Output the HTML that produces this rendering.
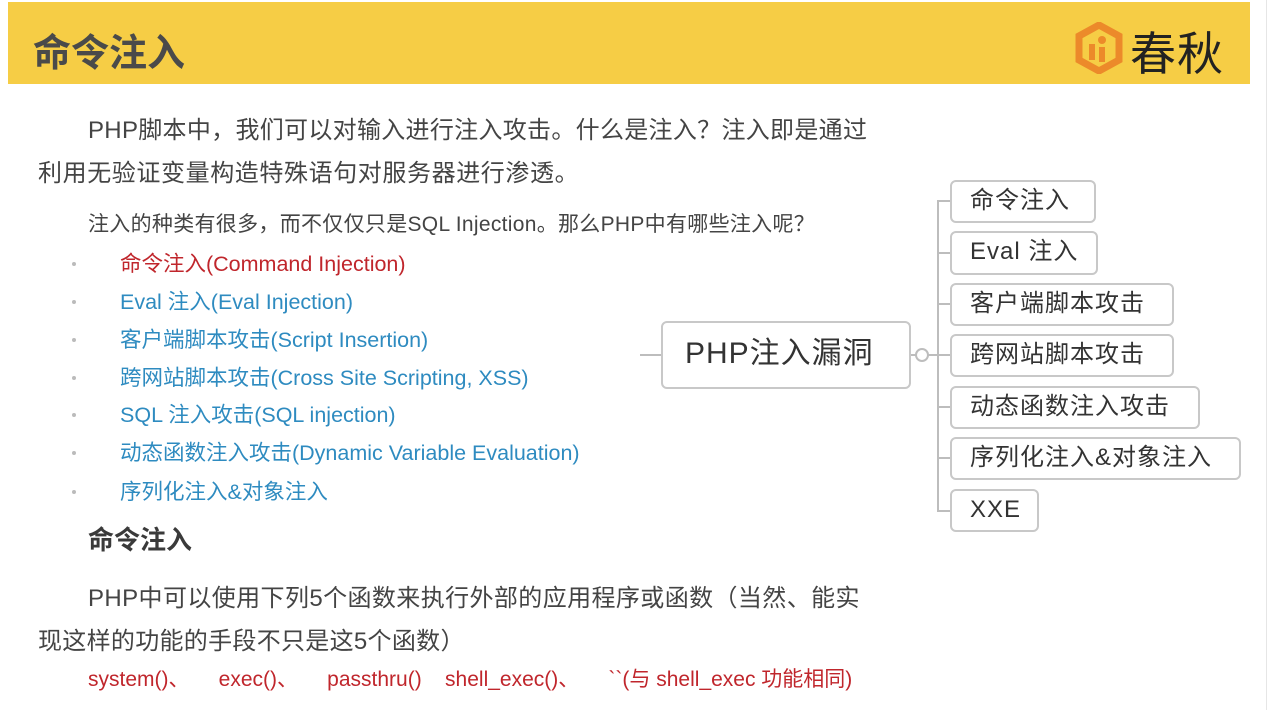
<!DOCTYPE html>
<html><head><meta charset="utf-8"><style>
*{margin:0;padding:0;box-sizing:border-box}
body{width:1270px;height:710px;background:#fff;position:relative;overflow:hidden;font-family:"Liberation Sans","Noto Sans CJK SC",sans-serif;color:#444}
.a{position:absolute;white-space:nowrap}
.hdr{position:absolute;left:8px;top:2px;width:1242px;height:82px;background:#f6cd45}
.box{position:absolute;border:2px solid #c8c8c8;border-radius:6px;background:#fff;font-size:24px;color:#333;padding-left:18px;line-height:38px;letter-spacing:1px}
.li{position:absolute;left:120px;font-size:21.5px;color:#2e8bc0;white-space:nowrap}
.dot{position:absolute;left:72px;width:4px;height:4px;border-radius:2px;background:#bbb}
.red{color:#c0262c}
</style></head><body>
<div class="hdr"></div>
<div class="a" style="left:33px;top:22px;font-size:38px;font-weight:bold;color:#4a4a4a">命令注入</div>
<svg class="a" style="left:1074px;top:22px" width="50" height="52" viewBox="0 0 50 52">
<path d="M25 3 L45 14 L45 38 L25 49 L5 38 L5 14 Z" fill="none" stroke="#ec8a2a" stroke-width="7"/>
<rect x="15" y="22" width="6" height="16" fill="#ec8a2a"/><circle cx="28" cy="18" r="4" fill="#ec8a2a"/><rect x="25" y="25" width="6" height="15" fill="#ec8a2a"/>
</svg>
<div class="a" style="left:1130px;top:18px;font-size:46px;color:#222;letter-spacing:1px">春秋</div>
<div style="position:absolute;left:1266px;top:0;width:1px;height:710px;background:#e6e6e6"></div>

<div class="a" style="left:88px;top:110px;font-size:24px;letter-spacing:0.3px">PHP脚本中，我们可以对输入进行注入攻击。什么是注入？注入即是通过</div>
<div class="a" style="left:38px;top:153px;font-size:24px;letter-spacing:0.6px">利用无验证变量构造特殊语句对服务器进行渗透。</div>
<div class="a" style="left:88px;top:208px;font-size:21px;letter-spacing:0.3px">注入的种类有很多，而不仅仅只是SQL Injection。那么PHP中有哪些注入呢？</div>

<div class="dot" style="top:262px"></div><div class="li red" style="top:247px">命令注入(Command Injection)</div>
<div class="dot" style="top:300px"></div><div class="li" style="top:285px">Eval 注入(Eval Injection)</div>
<div class="dot" style="top:338px"></div><div class="li" style="top:323px">客户端脚本攻击(Script Insertion)</div>
<div class="dot" style="top:376px"></div><div class="li" style="top:361px">跨网站脚本攻击(Cross Site Scripting, XSS)</div>
<div class="dot" style="top:413px"></div><div class="li" style="top:398px">SQL 注入攻击(SQL injection)</div>
<div class="dot" style="top:451px"></div><div class="li" style="top:436px">动态函数注入攻击(Dynamic Variable Evaluation)</div>
<div class="dot" style="top:490px"></div><div class="li" style="top:475px">序列化注入&amp;对象注入</div>

<div class="a" style="left:88px;top:520px;font-size:26px;font-weight:bold;color:#3a3a3a">命令注入</div>
<div class="a" style="left:88px;top:578px;font-size:24px;letter-spacing:0.4px">PHP中可以使用下列5个函数来执行外部的应用程序或函数（当然、能实</div>
<div class="a" style="left:38px;top:621px;font-size:24px;letter-spacing:0.3px">现这样的功能的手段不只是这5个函数）</div>
<div class="a red" style="left:88px;top:663px;font-size:21px">system()、&nbsp;&nbsp;&nbsp;&nbsp;&nbsp;exec()、&nbsp;&nbsp;&nbsp;&nbsp;&nbsp;passthru()&nbsp;&nbsp;&nbsp;&nbsp;shell_exec()、&nbsp;&nbsp;&nbsp;&nbsp;&nbsp;``(与 shell_exec 功能相同)</div>

<svg class="a" style="left:0;top:0" width="1270" height="710">
<g stroke="#bdbdbd" stroke-width="2" fill="none">
<line x1="640" y1="355" x2="661" y2="355"/>
<line x1="910" y1="355" x2="916" y2="355"/>
<circle cx="922" cy="355" r="6"/>
<line x1="928" y1="355" x2="938" y2="355"/>
<path d="M950 201 H938 V511 H950"/>
<line x1="938" y1="253" x2="950" y2="253"/>
<line x1="938" y1="304" x2="950" y2="304"/>
<line x1="938" y1="355" x2="950" y2="355"/>
<line x1="938" y1="407" x2="950" y2="407"/>
<line x1="938" y1="458" x2="950" y2="458"/>
</g></svg>
<div class="box" style="left:661px;top:321px;width:250px;height:68px;font-size:30px;line-height:62px;padding-left:22px">PHP注入漏洞</div>
<div class="box" style="left:950px;top:180px;width:146px;height:43px">命令注入</div>
<div class="box" style="left:950px;top:231px;width:148px;height:44px">Eval 注入</div>
<div class="box" style="left:950px;top:283px;width:224px;height:43px">客户端脚本攻击</div>
<div class="box" style="left:950px;top:334px;width:224px;height:43px">跨网站脚本攻击</div>
<div class="box" style="left:950px;top:386px;width:250px;height:43px">动态函数注入攻击</div>
<div class="box" style="left:950px;top:437px;width:291px;height:43px">序列化注入&amp;对象注入</div>
<div class="box" style="left:950px;top:489px;width:89px;height:43px">XXE</div>
</body></html>
